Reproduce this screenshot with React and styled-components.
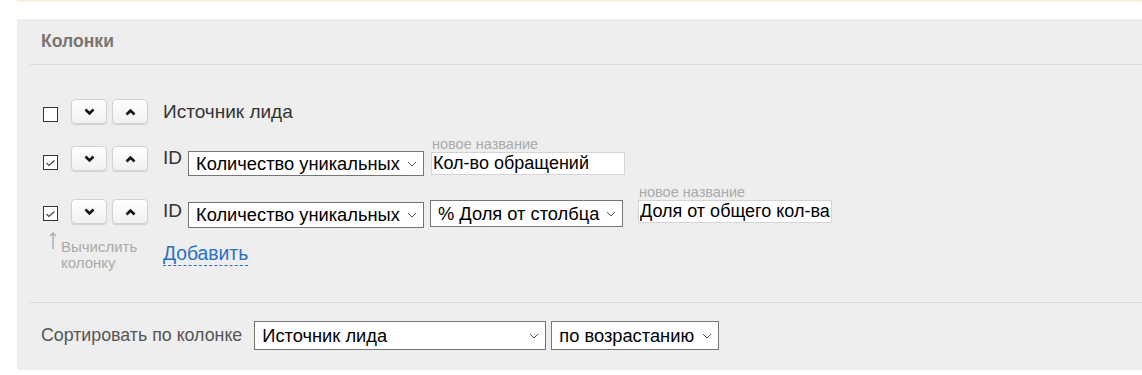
import React from "react";
import styled, { createGlobalStyle } from "styled-components";

const Global = createGlobalStyle`
  body {
    margin: 0;
    background: #fff;
    font-family: "Liberation Sans", Arial, sans-serif;
    color: #333;
  }
`;

const Page = styled.div`
  padding-left: 17px;
`;

const TopLine = styled.div`
  height: 2px;
  background: #f8f1dc;
  margin-bottom: 17px;
`;

const Panel = styled.div`
  background: #eeeeee;
  height: 351px;
  display: flex;
  flex-direction: column;
`;

const Header = styled.div`
  height: 45px;
  display: flex;
  align-items: center;
  padding-left: 24px;
  font-size: 17.6px;
  font-weight: bold;
  color: #7a7472;
`;

const Divider = styled.div`
  height: 1px;
  background: #d9d9d9;
  margin-left: 13px;
`;

const Columns = styled.div`
  padding: 34px 0 0 26px;
  height: 237px;
  box-sizing: border-box;
`;

const Row = styled.div`
  display: flex;
  align-items: flex-start;
  margin-bottom: ${(p) => p.$gap || 0}px;
`;

const Check = styled.span`
  width: 13px;
  height: 13px;
  border: 1px solid #333;
  background: #fff;
  margin-top: ${(p) => p.$top}px;
  display: flex;
  align-items: center;
  justify-content: center;
  flex: none;
`;

const Arrows = styled.div`
  display: flex;
  gap: 5px;
  margin-left: 13px;
  flex: none;
`;

const ArrowBtn = styled.button`
  width: 36px;
  height: 25px;
  border: 1px solid #d2d2d2;
  border-radius: 4px;
  background: linear-gradient(#ffffff, #f1f1f1);
  box-shadow: 0 1px 1px rgba(0, 0, 0, 0.12);
  display: flex;
  align-items: center;
  justify-content: center;
  padding: 0;
`;

const Name = styled.span`
  font-size: 19px;
  line-height: 25px;
  margin-left: 15px;
  color: #333;
`;

const Id = styled.span`
  font-size: 19px;
  line-height: 20px;
  margin: 2px 6px 0 15px;
  color: #333;
`;

const Select = styled.div`
  width: ${(p) => p.$w}px;
  height: ${(p) => p.$h || 24}px;
  box-sizing: border-box;
  border: 1px solid #767676;
  background: #fff;
  margin-top: ${(p) => p.$top || 0}px;
  margin-left: ${(p) => p.$ml || 0}px;
  padding: 0 6px 0 7px;
  display: flex;
  align-items: center;
  justify-content: space-between;
  font-size: 18.3px;
  color: #000;
  flex: none;
  white-space: nowrap;
`;

const Named = styled.div`
  display: flex;
  flex-direction: column;
  margin-left: ${(p) => p.$ml}px;
  margin-top: ${(p) => p.$top}px;
`;

const Hint = styled.span`
  font-size: 14.5px;
  line-height: 15px;
  color: #aaa;
  padding-left: 1px;
`;

const TextInput = styled.input`
  width: 194px;
  height: 23px;
  box-sizing: border-box;
  border: 1px solid #d4d4d4;
  background: #fff;
  font-family: "Liberation Sans", Arial, sans-serif;
  font-size: 18px;
  color: #000;
  padding: 0 1px;
  outline: none;
`;

const Footer = styled.div`
  display: flex;
  align-items: flex-start;
  margin-top: 4px;
`;

const Calc = styled.div`
  display: flex;
  align-items: flex-start;
  width: 114px;
  margin-left: 6px;
  flex: none;
`;

const CalcText = styled.span`
  font-size: 15px;
  line-height: 16px;
  color: #aaa;
  margin-top: 7px;
  margin-left: 4px;
`;

const AddLink = styled.a`
  font-size: 19.3px;
  line-height: 22px;
  color: #2a70c2;
  border-bottom: 1px dashed #2a70c2;
  margin-top: 11px;
  cursor: pointer;
`;

const Sort = styled.div`
  display: flex;
  align-items: center;
  padding: 18px 0 0 24px;
`;

const SortLabel = styled.span`
  font-size: 17.8px;
  color: #555;
  margin-right: 12px;
`;

const Chevron = () => (
  <svg width="10" height="6" viewBox="0 0 10 6">
    <path d="M1 1l4 4 4-4" fill="none" stroke="#555" strokeWidth="1" />
  </svg>
);

const Down = () => (
  <svg width="11" height="8" viewBox="0 0 11 8">
    <path d="M1.5 1.5l4 4 4-4" fill="none" stroke="#111" strokeWidth="2.6" />
  </svg>
);

const Up = () => (
  <svg width="11" height="8" viewBox="0 0 11 8">
    <path d="M1.5 6.5l4-4 4 4" fill="none" stroke="#111" strokeWidth="2.6" />
  </svg>
);

const Tick = () => (
  <svg width="13" height="13" viewBox="0 0 13 13">
    <path d="M2.5 7l2.5 2.5L10.5 4.5" fill="none" stroke="#444" strokeWidth="1.2" />
  </svg>
);

const UpArrow = () => (
  <svg width="8" height="17" viewBox="0 0 8 17">
    <path d="M4 1v16M1 4l3-3 3 3" fill="none" stroke="#b0b0b0" strokeWidth="1.5" />
  </svg>
);

const Moves = () => (
  <Arrows>
    <ArrowBtn><Down /></ArrowBtn>
    <ArrowBtn><Up /></ArrowBtn>
  </Arrows>
);

export default function App() {
  return (
    <Page>
      <Global />
      <TopLine />
      <Panel>
        <Header>Колонки</Header>
        <Divider />
        <Columns>
          <Row $gap={22}>
            <Check $top={8} />
            <Moves />
            <Name>Источник лида</Name>
          </Row>
          <Row $gap={23}>
            <Check $top={9}><Tick /></Check>
            <Moves />
            <Id>ID</Id>
            <Select $w={236} $h={25} $top={5}>
              Количество уникальных <Chevron />
            </Select>
            <Named $ml={7} $top={-9}>
              <Hint>новое название</Hint>
              <TextInput defaultValue="Кол-во обращений" />
            </Named>
          </Row>
          <Row>
            <Check $top={7}><Tick /></Check>
            <Moves />
            <Id>ID</Id>
            <Select $w={236} $h={26} $top={3}>
              Количество уникальных <Chevron />
            </Select>
            <Select $w={193} $h={27} $top={1} $ml={6}>
              % Доля от столбца <Chevron />
            </Select>
            <Named $ml={15} $top={-14}>
              <Hint>новое название</Hint>
              <TextInput defaultValue="Доля от общего кол-ва" />
            </Named>
          </Row>
          <Footer>
            <Calc>
              <UpArrow />
              <CalcText>Вычислить<br />колонку</CalcText>
            </Calc>
            <AddLink>Добавить</AddLink>
          </Footer>
        </Columns>
        <Divider />
        <Sort>
          <SortLabel>Сортировать по колонке</SortLabel>
          <Select $w={292} $h={29}>
            Источник лида <Chevron />
          </Select>
          <Select $w={168} $h={29} $ml={5}>
            по возрастанию <Chevron />
          </Select>
        </Sort>
      </Panel>
    </Page>
  );
}
